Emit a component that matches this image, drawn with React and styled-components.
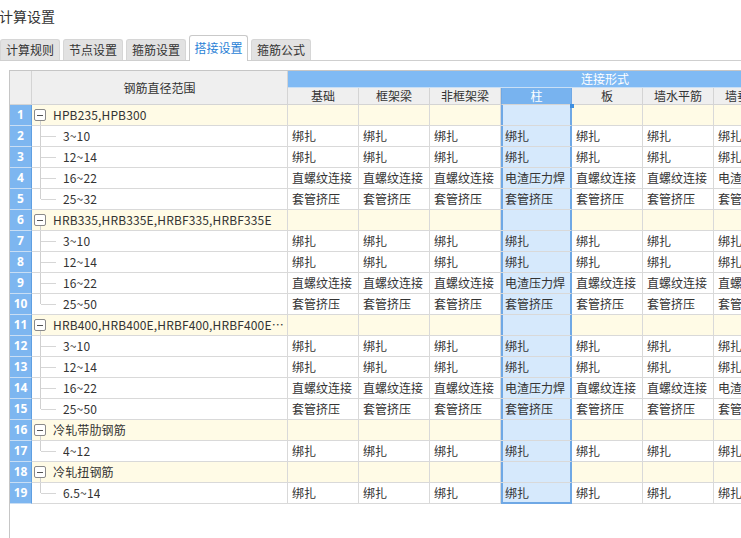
import React from 'react';
import styled, { createGlobalStyle, css } from 'styled-components';

const Global = createGlobalStyle`
  html, body { margin: 0; padding: 0; background: #fff; }
  body {
    font-family: "Noto Sans CJK SC", "Noto Sans", sans-serif;
    font-size: 12px;
    color: #333;
    overflow: hidden;
  }
  * { box-sizing: border-box; }
`;

const Page = styled.div`
  width: 741px;
  height: 538px;
  display: flex;
  flex-direction: column;
  overflow: hidden;
`;

const Title = styled.div`
  height: 35px;
  padding-top: 6px;
  line-height: 20px;
  font-size: 14px;
  color: #333;
  margin-left: -1px;
`;

const TabBar = styled.div`
  display: flex;
  align-items: flex-end;
  gap: 3px;
  height: 26px;
  border-bottom: 1px solid #cfcfcf;
`;

const Tab = styled.div`
  width: 60px;
  height: 21px;
  line-height: 20px;
  text-align: center;
  font-size: 12px;
  color: #333;
  background: #e2e2e2;
  border: 1px solid #d6d6d6;
  border-bottom: none;
  border-radius: 3px 3px 0 0;
  ${(p) =>
    p.$active &&
    css`
      height: 26px;
      line-height: 24px;
      background: #fff;
      color: #2a7fd6;
      border-color: #c9c9c9;
      margin-bottom: -1px;
      width: 59px;
    `}
`;

const Panel = styled.div`
  margin: 9px 0 0 9px;
  flex: 1;
  border-left: 1px solid #c6c6c6;
  border-top: 1px solid #c6c6c6;
  overflow: hidden;
`;

const Grid = styled.div`
  display: grid;
  grid-template-columns: 22px 256px repeat(9, 71px);
  grid-template-rows: 17px 17px;
  grid-auto-rows: 21px;
  width: max-content;
`;

const Cell = styled.div`
  position: relative;
  border-right: 1px solid #d9d9d9;
  border-bottom: 1px solid #d9d9d9;
  white-space: nowrap;
  overflow: hidden;
  line-height: 20px;
  padding-left: 4px;
  color: #333;
  background: ${(p) => (p.$group ? '#fffbe6' : '#fff')};
  ${(p) =>
    p.$sel &&
    css`
      background: #d6e9fc;
      overflow: visible;
      box-shadow: inset 2px 0 0 #6fa8e5, inset -1px 0 0 #6fa8e5;
      border-right-color: #6fa8e5;
    `}
  ${(p) =>
    p.$sel &&
    p.$last &&
    css`
      box-shadow: inset 2px 0 0 #6fa8e5, inset -1px 0 0 #6fa8e5, inset 0 -1px 0 #6fa8e5;
      border-bottom-color: #6fa8e5;
    `}
`;

const Handle = styled.span`
  position: absolute;
  top: -1px;
  right: -3px;
  width: 4px;
  height: 4px;
  background: #3f8fe0;
  z-index: 2;
`;

const HeadCell = styled.div`
  background: #efefef;
  border-right: 1px solid #d4d4d4;
  border-bottom: 1px solid #d4d4d4;
  display: flex;
  align-items: center;
  justify-content: center;
  white-space: nowrap;
  overflow: hidden;
  color: #333;
  font-size: 12px;
  line-height: 16px;
  grid-row: ${(p) => p.$row || 'auto'};
  grid-column: ${(p) => p.$col || 'auto'};
  ${(p) =>
    p.$blue &&
    css`
      background: #80baf4;
      color: #fff;
      border-right-color: #80baf4;
      border-bottom-color: #c9dff5;
    `}
  ${(p) =>
    p.$sel &&
    css`
      background: #78b3ef;
      color: #fff;
      border-right-color: #6fa8e5;
      border-left: 1px solid #6fa8e5;
    `}
`;

const SpanHead = styled(HeadCell)`
  justify-content: flex-start;
  padding-left: 293px;
`;

const NumCell = styled.div`
  background: #7db6f0;
  color: #fff;
  font-weight: bold;
  font-family: "Noto Sans", "DejaVu Sans", sans-serif;
  font-size: 12px;
  text-align: center;
  line-height: 20px;
  border-right: 1px solid #5f9fe2;
  border-bottom: 1px solid #c9def4;
`;

const TreeCell = styled(Cell)`
  padding-left: ${(p) => (p.$group ? '2px' : '31px')};
  padding-right: 3px;
  display: flex;
  align-items: center;
  &::before {
    content: '';
    position: absolute;
    left: 8px;
    width: 1px;
    background: #d0d0d0;
    ${(p) =>
      p.$group
        ? css`
            top: 15px;
            bottom: 0;
          `
        : css`
            top: 0;
            bottom: ${p.$lastChild ? '10px' : '0'};
          `}
  }
  ${(p) =>
    !p.$group &&
    css`
      &::after {
        content: '';
        position: absolute;
        left: 9px;
        top: 10px;
        width: 15px;
        height: 1px;
        background: #d6d6d6;
      }
    `}
`;

const Toggle = styled.span`
  flex: none;
  width: 12px;
  height: 12px;
  border: 1px solid #8a8a8a;
  border-radius: 2px;
  background: #fff;
  position: relative;
  margin-right: 7px;
  z-index: 1;
  &::after {
    content: '';
    position: absolute;
    left: 2px;
    right: 2px;
    top: 5px;
    height: 1px;
    background: #555;
  }
`;

const Label = styled.span`
  overflow: hidden;
  text-overflow: ellipsis;
  white-space: nowrap;
  min-width: 0;
  letter-spacing: 0.14px;
`;

const cols = ['基础', '框架梁', '非框架梁', '柱', '板', '墙水平筋', '墙垂直筋', '其它', '螺旋筋'];
const SEL = 3;

const B = Array(9).fill('绑扎');
const T = Array(9).fill('套管挤压');
const Z1 = ['直螺纹连接', '直螺纹连接', '直螺纹连接', '电渣压力焊', '直螺纹连接', '直螺纹连接', '电渣压力焊', '直螺纹连接', '绑扎'];
const Z2 = ['直螺纹连接', '直螺纹连接', '直螺纹连接', '电渣压力焊', '直螺纹连接', '直螺纹连接', '直螺纹连接', '直螺纹连接', '绑扎'];

const rows = [
  { g: true, t: 'HPB235,HPB300' },
  { t: '3~10', v: B },
  { t: '12~14', v: B },
  { t: '16~22', v: Z1 },
  { t: '25~32', v: T, last: true },
  { g: true, t: 'HRB335,HRB335E,HRBF335,HRBF335E' },
  { t: '3~10', v: B },
  { t: '12~14', v: B },
  { t: '16~22', v: Z2 },
  { t: '25~50', v: T, last: true },
  { g: true, t: 'HRB400,HRB400E,HRBF400,HRBF400E,RRB400' },
  { t: '3~10', v: B },
  { t: '12~14', v: B },
  { t: '16~22', v: Z1 },
  { t: '25~50', v: T, last: true },
  { g: true, t: '冷轧带肋钢筋' },
  { t: '4~12', v: B, last: true },
  { g: true, t: '冷轧扭钢筋' },
  { t: '6.5~14', v: B, last: true },
];

const tabs = ['计算规则', '节点设置', '箍筋设置', '搭接设置', '箍筋公式'];

export default function App() {
  return (
    <Page>
      <Global />
      <Title>计算设置</Title>
      <TabBar>
        {tabs.map((t, i) => (
          <Tab key={t} $active={i === 3}>
            {t}
          </Tab>
        ))}
      </TabBar>
      <Panel>
        <Grid>
          <HeadCell $row="1 / span 2" $col="1" />
          <HeadCell $row="1 / span 2" $col="2">钢筋直径范围</HeadCell>
          <SpanHead $row="1" $col="3 / span 9" $blue>
            连接形式
          </SpanHead>
          {cols.map((c, i) => (
            <HeadCell key={c} $row="2" $col={`${i + 3}`} $sel={i === SEL}>
              {c}
            </HeadCell>
          ))}
          {rows.map((r, ri) => (
            <React.Fragment key={ri}>
              <NumCell>{ri + 1}</NumCell>
              <TreeCell $group={r.g} $lastChild={r.last}>
                {r.g && <Toggle />}
                <Label>{r.t}</Label>
              </TreeCell>
              {cols.map((c, ci) => (
                <Cell
                  key={c}
                  $group={r.g}
                  $sel={ci === SEL}
                  $last={ri === rows.length - 1}
                >
                  {ci === SEL && ri === 0 && <Handle />}
                  {r.g ? '' : r.v[ci]}
                </Cell>
              ))}
            </React.Fragment>
          ))}
        </Grid>
      </Panel>
    </Page>
  );
}
